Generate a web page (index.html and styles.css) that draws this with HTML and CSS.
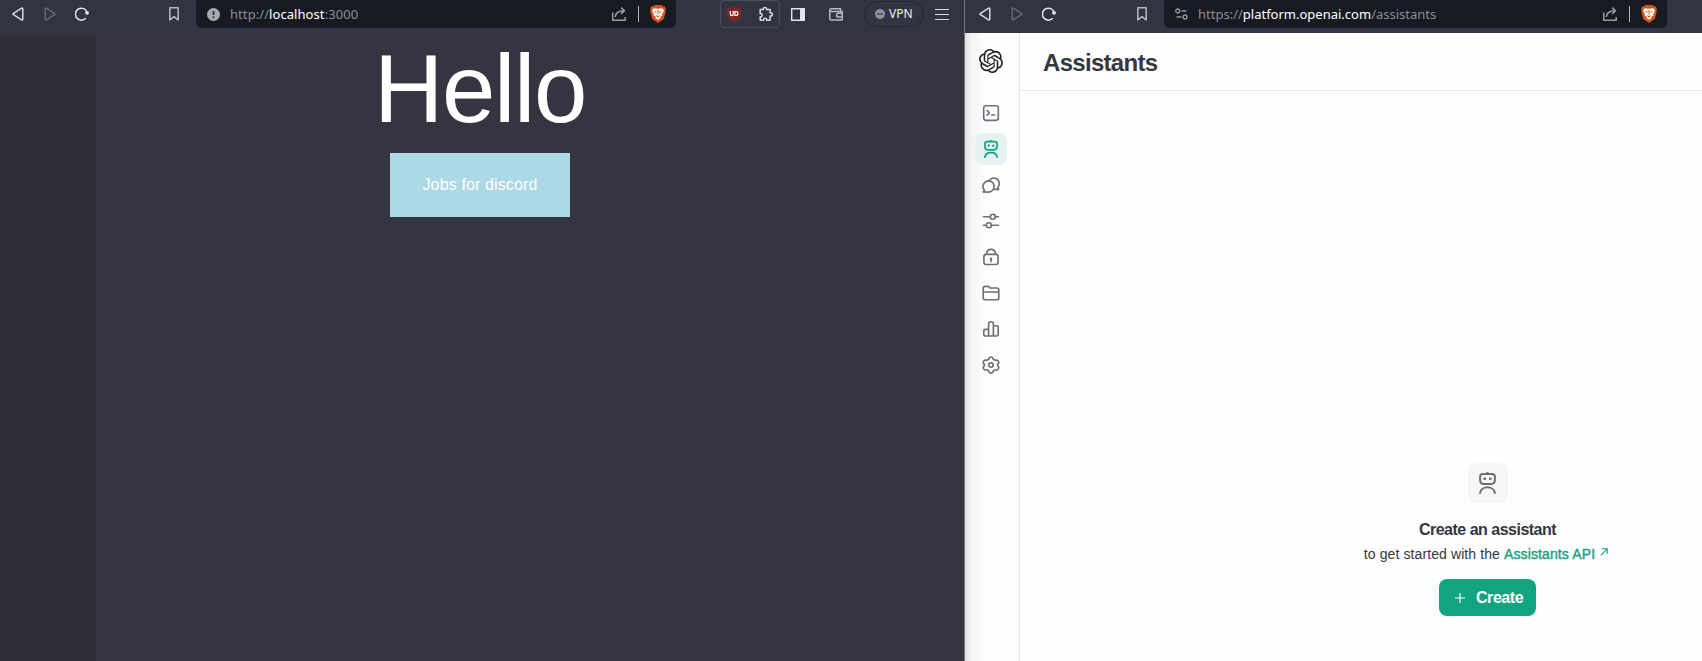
FILE: index.html
```html
<!DOCTYPE html>
<html lang="en">
<head>
<meta charset="utf-8">
<title>Assistants</title>
<link rel="stylesheet" href="styles.css">
</head>
<body>
<svg class="defs" width="0" height="0" aria-hidden="true">
  <symbol id="back" viewBox="0 0 12 14"><path d="M9.7 1.2 1.5 6.3q-.9.7 0 1.4l8.2 5.1q1.1.5 1.1-.7V1.900q0-1.200-1.100-.7Z"/></symbol>
  <symbol id="reload" viewBox="0 0 14 14"><path d="M10.800 11.300A6 6 0 1 1 11.800 4.500"/><circle cx="12" cy="5.800" r="1.900" fill="currentColor" stroke="none"/></symbol>
  <symbol id="bookmark" viewBox="0 0 10 14"><path d="M.8.800h8.400v12.200L5 9.700.8 13Z"/></symbol>
  <symbol id="share" viewBox="0 0 14 14"><path d="M.7 5.500v7.700h12.500V10M3.300 10c.2-4.500 3-6.300 8.700-6.300M9.200.6l3.300 3.100-3.300 3.200"/></symbol>
  <symbol id="brave" viewBox="0 0 16 18"><path fill="#d4541c" d="M4.500 0h7l1.500 1.400 1.600-.1L16 4l-.6 1.500.3 1.500-2 7L8 18l-5.700-4-2-7 .3-1.500L0 4l1.400-2.700L3 1.400Z"/><path fill="#fff" d="M3.700 3.200 8 3.800l4.300-.6L14 5.500l-2 4 .4 1.300-2.400 1L10.700 13 8 14.800 5.300 13l.7-1.200-2.400-1L4 9.500l-2-4Z"/><path fill="#d4541c" d="m3.900 6 3 .7-1 1.300ZM12.100 6l-3 .7 1 1.300ZM7.500 5h1v4.500h-1ZM6 10l2 1 2-1-1.200 2.200H7.200Z"/></symbol>
  <symbol id="robot" viewBox="0 0 14 18"><path d="M7 .3V1.600M3.300 1.600h7.400q2.400 0 2.400 2.400v2.600q0 3.200-3 3.200H3.900q-3 0-3-3.200V4Q.9 1.600 3.300 1.600ZM.9 17.200c.7-6.200 11.500-6.200 12.200 0"/><circle cx="4.700" cy="5.600" r="1.200" fill="currentColor" stroke="none"/><circle cx="9.300" cy="5.600" r="1.200" fill="currentColor" stroke="none"/></symbol>
</svg>

<main class="desktop">
  <section class="window local">
    <header class="toolbar">
      <svg class="ico back"><use href="#back"/></svg>
      <svg class="ico forward"><use href="#back"/></svg>
      <svg class="ico reload"><use href="#reload"/></svg>
      <svg class="ico bookmark"><use href="#bookmark"/></svg>
      <div class="urlbar">
        <svg class="info" viewBox="0 0 13 13"><circle cx="6.500" cy="6.500" r="6.500" fill="#a9a9b0"/><path d="M6.500 3v4M6.500 8.500v1.700" stroke="#24262e" stroke-width="1.700"/></svg>
        <span class="url url-local">http://<b>localhost</b>:3000</span>
        <svg class="ico share"><use href="#share"/></svg>
        <i class="sep"></i>
        <svg class="brave"><use href="#brave"/></svg>
      </div>
      <div class="extensions">
        <svg class="shield" viewBox="0 0 14 16"><path fill="#7d2626" d="M7 0c2 1.500 4.500 2 7 2v7c0 3-3 5.300-7 7-4-1.700-7-4-7-7V2c2.500 0 5-.5 7-2Z"/><path d="M3.300 5v3q0 1.700 1.400 1.700T6.200 8V5M7.900 5.500v4h.9q2.100 0 2.100-2t-2.100-2Z" fill="none" stroke="#fff" stroke-width="1.200"/></svg>
        <svg class="ico puzzle" viewBox="0 0 14 14"><path d="M1.200 2.600h3.100C3.600-.3 8.200-.3 7.500 2.600h3.600v3.300c3-.7 3 3.700 0 3v4.300H7.700c.4-2.500-3.500-2.500-3.100 0H1.200V9.700c2.600.5 2.600-3.700 0-3.200Z"/></svg>
      </div>
      <svg class="panel" viewBox="0 0 14 13"><path d="M.7.700h12.600v11.600H.7Z" fill="none" stroke="#e4e4e8" stroke-width="1.400"/><path d="M9 0h5v13H9Z" fill="#e4e4e8"/></svg>
      <svg class="ico wallet" viewBox="0 0 14 13"><path d="M11.500 3V.8H2.200Q.8.800.8 2.200v8.200q0 1.700 1.700 1.700h10.700V9M.8 2.200Q.8 3.500 2.500 3.500h10.700v1.800M13.200 5.300H9.500a1.900 1.900 0 0 0 0 3.800h3.700Z"/></svg>
      <div class="vpn"><svg viewBox="0 0 10 10"><circle cx="5" cy="5" r="5" fill="#8f9099"/><path d="M2 5h6" stroke="#343643" stroke-width="1.200"/></svg><span>VPN</span></div>
      <svg class="ico menu" viewBox="0 0 14 12"><path d="M0 1.500h14M0 6.500h14M0 11.500h14"/></svg>
    </header>
    <div class="page">
      <aside class="rail"></aside>
      <div class="hello">
        <h1>Hello</h1>
        <button class="jobs">Jobs for discord</button>
      </div>
    </div>
  </section>

  <section class="window openai">
    <header class="toolbar">
      <svg class="ico back"><use href="#back"/></svg>
      <svg class="ico forward"><use href="#back"/></svg>
      <svg class="ico reload"><use href="#reload"/></svg>
      <svg class="ico bookmark"><use href="#bookmark"/></svg>
      <div class="urlbar">
        <svg class="ico tune" viewBox="0 0 13 12"><circle cx="2.700" cy="3" r="2"/><circle cx="10" cy="9" r="2"/><path d="M6.500 3h5M1.500 9h5"/></svg>
        <span class="url url-openai">https://<b>platform.openai.com</b>/assistants</span>
        <svg class="ico share"><use href="#share"/></svg>
        <i class="sep"></i>
        <svg class="brave"><use href="#brave"/></svg>
      </div>
    </header>
    <div class="app">
      <nav class="sidebar">
        <svg class="logo" viewBox="0 0 24 24"><path d="M22.2819 9.8211a5.9847 5.9847 0 0 0-.5157-4.9108 6.0462 6.0462 0 0 0-6.5098-2.9A6.0651 6.0651 0 0 0 4.9807 4.1818a5.9847 5.9847 0 0 0-3.9977 2.9 6.0462 6.0462 0 0 0 .7427 7.0966 5.98 5.98 0 0 0 .511 4.9107 6.051 6.051 0 0 0 6.5146 2.9001A5.9847 5.9847 0 0 0 13.2599 24a6.0557 6.0557 0 0 0 5.7718-4.2058 5.9894 5.9894 0 0 0 3.9977-2.9001 6.0557 6.0557 0 0 0-.7475-7.0729zm-9.022 12.6081a4.4755 4.4755 0 0 1-2.8764-1.0408l.1419-.0804 4.7783-2.7582a.7948.7948 0 0 0 .3927-.6813v-6.7369l2.02 1.1686a.071.071 0 0 1 .038.052v5.5826a4.504 4.504 0 0 1-4.4945 4.4944zm-9.6607-4.1254a4.4708 4.4708 0 0 1-.5346-3.0137l.142.0852 4.783 2.7582a.7712.7712 0 0 0 .7806 0l5.8428-3.3685v2.3324a.0804.0804 0 0 1-.0332.0615L9.74 19.9502a4.4992 4.4992 0 0 1-6.1408-1.6464zM2.3408 7.8956a4.485 4.485 0 0 1 2.3655-1.9728V11.6a.7664.7664 0 0 0 .3879.6765l5.8144 3.3543-2.0201 1.1685a.0757.0757 0 0 1-.071 0l-4.8303-2.7865A4.504 4.504 0 0 1 2.3408 7.872zm16.5963 3.8558L13.1038 8.364 15.1192 7.2a.0757.0757 0 0 1 .071 0l4.8303 2.7913a4.4944 4.4944 0 0 1-.6765 8.1042v-5.6772a.79.79 0 0 0-.407-.667zm2.0107-3.0231l-.142-.0852-4.7735-2.7818a.7759.7759 0 0 0-.7854 0L9.409 9.2297V6.8974a.0662.0662 0 0 1 .0284-.0615l4.8303-2.7866a4.4992 4.4992 0 0 1 6.6802 4.66zM8.3065 12.863l-2.02-1.1638a.0804.0804 0 0 1-.038-.0567V6.0742a4.4992 4.4992 0 0 1 7.3757-3.4537l-.142.0805L8.704 5.459a.7948.7948 0 0 0-.3927.6813zm1.0976-2.3654l2.602-1.4998 2.6069 1.4998v2.9994l-2.5974 1.4997-2.6067-1.4997Z"/></svg>
        <a class="item"><svg class="nav-ico" viewBox="0 0 18 18"><rect x="1.700" y="1.700" width="14.600" height="14.600" rx="2.200"/><path d="m5.200 6.500 2.200 2.300-2.200 2.300M9.500 11h3.300"/></svg></a>
        <a class="item active"><svg class="robot-small"><use href="#robot"/></svg></a>
        <a class="item"><svg class="nav-ico" viewBox="0 0 18 18"><path d="M1.200 16 2.400 14.300A5.600 5.600 0 1 1 7 16.100ZM7 5.200A5.400 5.400 0 1 1 15.800 11.200l.7 2.100h-4"/></svg></a>
        <a class="item"><svg class="nav-ico" viewBox="0 0 18 18"><path d="M1.500 4.700h6.700M13.300 4.700h3.200M1.500 13.200h2.700M9.300 13.200h7.200"/><circle cx="10.800" cy="4.700" r="2.500"/><circle cx="6.800" cy="13.200" r="2.500"/></svg></a>
        <a class="item"><svg class="nav-ico" viewBox="0 0 18 18"><rect x="1.900" y="6.300" width="14.200" height="10.200" rx="2.200"/><path d="M4.500 6.200c.2-6.500 8.800-6.500 9 0M9 11v2.600"/><circle cx="9" cy="10.700" r="1.200" fill="currentColor" stroke="none"/></svg></a>
        <a class="item"><svg class="nav-ico" viewBox="0 0 18 18"><path d="M1.200 13.700V4.300Q1.200 2.300 3.200 2.300h2.500q1 0 1.600.8l.7.900h6.700q2.100 0 2.100 2v7.700q0 2-2 2H3.200q-2 0-2-2ZM1.200 8h15.600"/></svg></a>
        <a class="item"><svg class="nav-ico" viewBox="0 0 18 18"><path d="M6.600 16H3.300Q1.800 16 1.800 14.500v-3.700q0-1.500 1.500-1.500h3.300M11.400 5.700h3.300q1.500 0 1.500 1.500v7.300q0 1.500-1.500 1.500h-3.300M6.600 16V3.700q0-2 2.400-2t2.400 2V16Z"/></svg></a>
        <a class="item"><svg class="nav-ico" viewBox="0 0 18 18"><path d="M7.300 1.800q1.700-1.600 3.400 0l.7 1.500 1.800.9 1.700-.1q2.200.7 1.800 2.900l-1 1.300v1.500l1 1.300q.4 2.200-1.800 2.900l-1.700-.1-1.800.9-.7 1.500q-1.700 1.600-3.400 0l-.7-1.500-1.800-.9-1.700.1q-2.200-.7-1.800-2.900l1-1.300V8.300L1.300 7q-.4-2.200 1.800-2.900l1.700.1 1.800-.9Z"/><circle cx="9" cy="9" r="2.200"/></svg></a>
      </nav>
      <div class="content">
        <div class="title"><h2>Assistants</h2></div>
        <div class="empty">
          <div class="badge"><svg class="robot-big"><use href="#robot"/></svg></div>
          <h3>Create an assistant</h3>
          <p><span class="lead">to get started with the</span> <a>Assistants API</a><svg class="arrow" viewBox="0 0 8 8"><path d="M.7 7.300 7.200.8M2 .8h5.200V6"/></svg></p>
          <button class="create"><svg viewBox="0 0 12 12"><path d="M6 1v10M1 6h10"/></svg><span>Create</span></button>
        </div>
      </div>
    </div>
  </section>
</main>
</body>
</html>
```

FILE: styles.css
```css
* { box-sizing: border-box; }
body { margin: 0; overflow: hidden; font-family: "Liberation Sans", Arial, sans-serif; }
.defs { display: none; }
h1, h2, h3, p { margin: 0; }
svg { display: block; flex: none; }
button { border: 0; }

.desktop { display: flex; width: 1702px; height: 661px; }
.window { display: flex; flex-direction: column; height: 661px; }
.local { width: 965px; border-right: 1px solid #77777c; background: #353541; }
.openai { width: 737px; background: #fefefe; }

/* Browser toolbar */
.toolbar { display: flex; align-items: center; height: 33px; padding: 0 0 5px 12px; background: #323443; color: #d9d9de; }
.openai .toolbar { padding-left: 14px; }
.ico { fill: none; stroke: currentColor; stroke-width: 1.5; stroke-linejoin: round; }
.back { width: 12px; height: 14px; }
.forward { width: 12px; height: 14px; margin-left: 20px; transform: scaleX(-1); color: #666774; }
.reload { width: 14px; height: 14px; margin-left: 19px; color: #e8e8ec; }
.bookmark { width: 10px; height: 14px; margin-left: 80px; color: #b9bac1; }
.openai .bookmark { margin-left: 81px; }
.urlbar { display: flex; align-items: center; height: 28px; width: 480px; margin-left: 17px; padding: 0 10px 0 11px; border-radius: 2px 2px 5px 5px; background: #181a21; }
.openai .urlbar { width: 503px; }
.info { width: 13px; height: 13px; }
.tune { width: 13px; height: 12px; color: #96979f; stroke-width: 1.3; }
.url { margin-left: 10px; font: 13px/18px "Noto Sans", sans-serif; color: #8b8c95; white-space: nowrap; }
.url b { font-weight: 400; color: #fff; }
.url-local { letter-spacing: .07px; }
.url-openai { letter-spacing: 0; }
.share { width: 14px; height: 14px; margin-left: auto; color: #9b9ca4; }
.sep { width: 1px; height: 16px; margin-left: 12px; background: #b5b5bc; }
.brave { width: 16px; height: 18px; margin-left: 11px; }
.extensions { display: flex; align-items: center; justify-content: space-between; width: 60px; height: 28px; margin-left: 44px; padding: 0 6px; border: 1px solid #4b4c5a; border-radius: 4px; }
.shield { width: 14px; height: 16px; }
.puzzle { width: 14px; height: 14px; }
.panel { width: 14px; height: 13px; margin-left: 11px; }
.wallet { width: 14px; height: 13px; margin-left: 24px; color: #b9bac1; }
.vpn { display: flex; align-items: center; gap: 4px; width: 60px; height: 26px; margin-left: 21px; padding-left: 10px; border: 1px solid #24252e; border-radius: 13px; font: 12px/16px "Noto Sans", sans-serif; color: #f0f0f3; }
.vpn svg { width: 10px; height: 10px; }
.menu { width: 14px; height: 12px; margin-left: 11px; stroke-width: 1.2; }

/* Local page */
.page { display: grid; grid-template-columns: 96px 1fr; flex: 1; }
.rail { background: #2f2f38; }
.hello { display: flex; flex-direction: column; align-items: center; width: 772px; padding-top: 8px; }
.hello h1 { margin-right: 4px; font-size: 96px; line-height: 96px; font-weight: 400; letter-spacing: -1.4px; color: #fff; }
.jobs { width: 180px; height: 64px; margin: 16px 4px 0 0; padding: 0; background: #add8e6; color: #fff; font: 16px "Liberation Sans", Arial, sans-serif; letter-spacing: .13px; }

/* Assistants app */
.app { display: flex; flex: 1; }
.sidebar { display: flex; flex-direction: column; align-items: center; gap: 4px; width: 55px; padding: 16px 3px 0 0; border-right: 1px solid #e8e8ea; background: linear-gradient(90deg, #e2e2e2, #f3f3f3 7px, #fbfbfb 16px, #fefefe 25px); color: #6e6e7a; }
.logo { width: 24px; height: 24px; margin-bottom: 20px; fill: #202123; }
.item { display: grid; place-items: center; width: 32px; height: 32px; border-radius: 8px; }
.item.active { background: #e7f1f2; color: #14a083; }
.nav-ico, .robot-small, .robot-big { fill: none; stroke: currentColor; stroke-width: 1.65; stroke-linecap: round; stroke-linejoin: round; }
.nav-ico { width: 18px; height: 18px; }
.robot-small { width: 14px; height: 18px; }
.robot-big { width: 17px; height: 22px; margin-bottom: 1px; }
.content { flex: 1; display: flex; flex-direction: column; }
.title { display: flex; align-items: center; height: 58px; padding: 2px 0 0 23px; border-bottom: 1px solid #e8e8ea; }
.title h2 { font-size: 24px; line-height: 32px; letter-spacing: -.7px; color: #353740; }
.empty { display: flex; flex-direction: column; align-items: center; width: 250px; margin: 372px 0 0 342.5px; color: #353740; }
.badge { display: grid; place-items: center; width: 40px; height: 40px; border-radius: 8px; background: #f6f6f6; color: #6e6e73; }
.empty h3 { margin-top: 15px; font-size: 16px; line-height: 24px; letter-spacing: -.5px; }
.empty p { display: flex; align-items: center; margin-top: 2px; font-size: 14px; line-height: 20px; letter-spacing: .1px; white-space: nowrap; }
.empty p a { margin-left: 4px; letter-spacing: .12px; color: #1a9f83; -webkit-text-stroke: .4px currentColor; }
.arrow { width: 8px; height: 8px; margin: -4px 3px 0 5px; fill: none; stroke: #10a37f; stroke-width: 1.1; }
.create { display: flex; align-items: center; width: 97px; height: 37px; margin-top: 15px; padding: 0 0 0 15px; border-radius: 8px; background: #12a480; color: #fff; font: bold 16px "Liberation Sans", Arial, sans-serif; letter-spacing: -.45px; }
.create svg { width: 12px; height: 12px; margin-right: 10px; stroke: #fff; stroke-width: 1.1; }
```
